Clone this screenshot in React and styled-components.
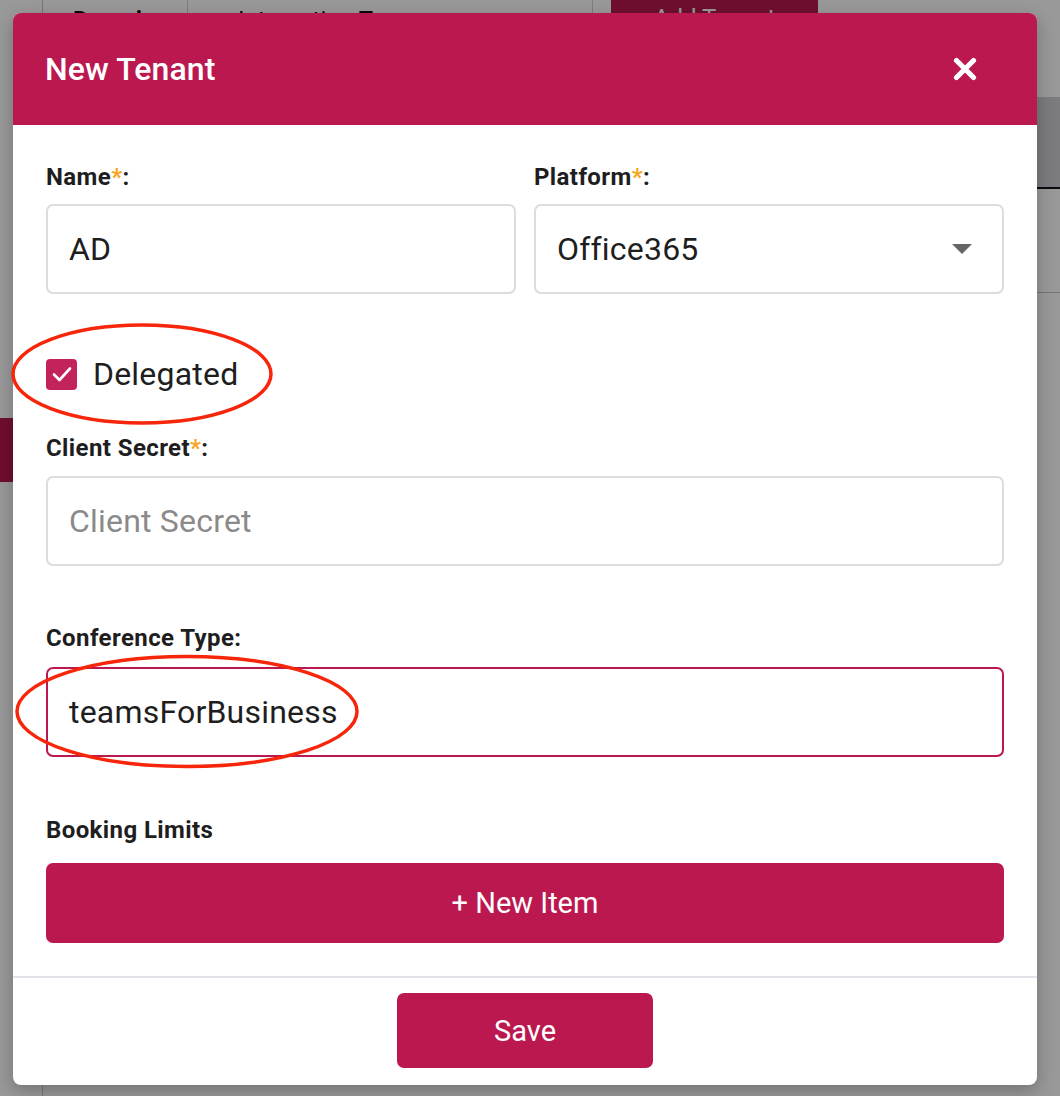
import React from "react";
import styled, { createGlobalStyle } from "styled-components";

const CRIMSON = "#bb1850";

const GlobalStyle = createGlobalStyle`
  html, body { margin: 0; padding: 0; }
  body {
    font-family: Roboto, "Liberation Sans", Arial, sans-serif;
    background: #ffffff;
    overflow: hidden;
  }
  * { box-sizing: border-box; }
`;

const Page = styled.div`
  position: relative;
  width: 1060px;
  height: 1096px;
  display: flex;
  background: #ffffff;
  overflow: hidden;
`;

const Sidebar = styled.aside`
  width: 43px;
  flex: none;
  border-right: 1px solid #c8c8c8;
  display: flex;
  flex-direction: column;
`;

const SideItem = styled.div`
  margin-top: 418px;
  height: 64px;
  background: ${CRIMSON};
`;

const Main = styled.main`
  flex: 1;
  display: flex;
  flex-direction: column;
`;

const TopBar = styled.div`
  height: 44px;
  display: flex;
  align-items: stretch;
`;

const TopCell = styled.div`
  width: ${(p) => p.$w}px;
  border-right: 1px solid #d0d0d0;
  padding: 6px 0 0 ${(p) => p.$pad}px;
  font-size: 24px;
  font-weight: ${(p) => (p.$bold ? 700 : 400)};
  color: #111;
`;

const AddButton = styled.div`
  margin-left: 18px;
  width: 207px;
  background: ${CRIMSON};
  color: #fff;
  font-size: 24px;
  text-align: center;
  padding-top: 4px;
`;

const TableHead = styled.div`
  margin-top: 53px;
  height: 92px;
  background: #cdced5;
  border-bottom: 2px solid #111;
`;

const TableRow = styled.div`
  height: 104px;
  border-bottom: 1px solid #c4c4c4;
`;

const Overlay = styled.div`
  position: absolute;
  inset: 0;
  background: rgba(0, 0, 0, 0.4);
`;

const Modal = styled.div`
  position: absolute;
  top: 13px;
  left: 13px;
  width: 1024px;
  height: 1072px;
  background: #fff;
  border-radius: 8px;
  overflow: hidden;
  display: flex;
  flex-direction: column;
  box-shadow: 0 6px 18px rgba(0, 0, 0, 0.25);
`;

const Header = styled.header`
  height: 112px;
  flex: none;
  background: ${CRIMSON};
  display: flex;
  align-items: center;
  justify-content: space-between;
  padding: 0 60px 0 32px;
`;

const Title = styled.h2`
  margin: 0;
  color: #fff;
  font-size: 32px;
  font-weight: 500;
  letter-spacing: 0.1px;
`;

const CloseButton = styled.button`
  border: 0;
  background: transparent;
  padding: 0;
  width: 24px;
  height: 24px;
  display: flex;
  cursor: pointer;
`;

const Body = styled.div`
  padding: 38px 33px 33px;
  display: flex;
  flex-direction: column;
`;

const Row = styled.div`
  display: grid;
  grid-template-columns: 1fr 1fr;
  column-gap: 18px;
`;

const Field = styled.div`
  display: flex;
  flex-direction: column;
  margin-top: ${(p) => p.$mt || 0}px;
`;

const Label = styled.label`
  font-size: 24px;
  line-height: 28px;
  font-weight: 700;
  letter-spacing: 0.4px;
  color: #1e1e1e;
  margin-bottom: ${(p) => p.$mb ?? 13}px;
`;

const Star = styled.span`
  color: #f5a623;
`;

const Input = styled.div`
  height: 90px;
  border: ${(p) => (p.$focus ? `2px solid ${CRIMSON}` : "2px solid #dcdcdc")};
  border-radius: 7px;
  display: flex;
  align-items: center;
  justify-content: space-between;
  padding: 0 30px 0 21px;
  font-size: 32px;
  letter-spacing: 0.2px;
  color: ${(p) => (p.$placeholder ? "#8a8a8a" : "#1e1e1e")};
`;

const Caret = styled.span`
  width: 0;
  height: 0;
  border-left: 10px solid transparent;
  border-right: 10px solid transparent;
  border-top: 10px solid #666;
`;

const CheckRow = styled.div`
  margin-top: 60px;
  height: 40px;
  display: flex;
  align-items: center;
  gap: 16px;
  font-size: 32px;
  letter-spacing: 0.2px;
  color: #1e1e1e;
`;

const CheckBox = styled.span`
  width: 31px;
  height: 31px;
  border-radius: 4px;
  background: #c2235c;
  display: flex;
  align-items: center;
  justify-content: center;
`;

const BigButton = styled.button`
  border: 0;
  border-radius: 7px;
  background: ${CRIMSON};
  color: #fff;
  font-family: inherit;
  font-size: 29px;
  width: ${(p) => (p.$w ? `${p.$w}px` : "100%")};
  height: ${(p) => p.$h || 80}px;
  cursor: pointer;
`;

const Footer = styled.footer`
  border-top: 2px solid #e3e3ea;
  flex: 1;
  display: flex;
  justify-content: center;
  align-items: flex-start;
  padding-top: 15px;
`;

const Annotations = styled.svg`
  position: absolute;
  inset: 0;
  pointer-events: none;
`;

export default function App() {
  return (
    <>
      <GlobalStyle />
      <Page>
        <Sidebar>
          <SideItem />
        </Sidebar>
        <Main>
          <TopBar>
            <TopCell $w={145} $pad={30} $bold>
              Domain
            </TopCell>
            <TopCell $w={405} $pad={50}>
              Integration Type
            </TopCell>
            <AddButton>Add Tenant</AddButton>
          </TopBar>
          <TableHead />
          <TableRow />
        </Main>
        <Overlay />
        <Modal>
          <Header>
            <Title>New Tenant</Title>
            <CloseButton aria-label="Close">
              <svg width="24" height="24" viewBox="0 0 24 24">
                <path
                  d="M3.5 3.5 L20.5 20.5 M20.5 3.5 L3.5 20.5"
                  stroke="#fff"
                  strokeWidth="5.2"
                  strokeLinecap="round"
                />
              </svg>
            </CloseButton>
          </Header>
          <Body>
            <Row>
              <Field>
                <Label $mb={13}>
                  Name<Star>*</Star>:
                </Label>
                <Input>AD</Input>
              </Field>
              <Field>
                <Label $mb={13}>
                  Platform<Star>*</Star>:
                </Label>
                <Input>
                  Office365
                  <Caret />
                </Input>
              </Field>
            </Row>
            <CheckRow>
              <CheckBox>
                <svg width="24" height="24" viewBox="0 0 24 24">
                  <path
                    d="M4 12.5 L9.5 18 L20 6.5"
                    fill="none"
                    stroke="#fff"
                    strokeWidth="2.6"
                    strokeLinecap="round"
                    strokeLinejoin="round"
                  />
                </svg>
              </CheckBox>
              Delegated
            </CheckRow>
            <Field $mt={40}>
              <Label $mb={14}>
                Client Secret<Star>*</Star>:
              </Label>
              <Input $placeholder>Client Secret</Input>
            </Field>
            <Field $mt={58}>
              <Label $mb={15}>Conference Type:</Label>
              <Input $focus>teamsForBusiness</Input>
            </Field>
            <Field $mt={59}>
              <Label $mb={19}>Booking Limits</Label>
              <BigButton>+ New Item</BigButton>
            </Field>
          </Body>
          <Footer>
            <BigButton $w={256} $h={75}>
              Save
            </BigButton>
          </Footer>
        </Modal>
        <Annotations width="1060" height="1096" viewBox="0 0 1060 1096">
          <ellipse cx="142" cy="374" rx="129" ry="49" fill="none" stroke="#f7250a" strokeWidth="3.5" />
          <ellipse cx="187" cy="711.5" rx="170" ry="55" fill="none" stroke="#f7250a" strokeWidth="3.5" />
        </Annotations>
      </Page>
    </>
  );
}
